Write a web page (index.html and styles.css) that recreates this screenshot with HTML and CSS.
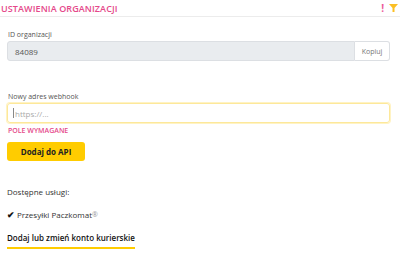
FILE: index.html
```html
<!DOCTYPE html>
<html lang="pl">
<head>
  <meta charset="UTF-8">
  <meta name="viewport" content="width=device-width, initial-scale=1.0">
  <title>Ustawienia organizacji</title>
  <link rel="stylesheet" href="styles.css">
</head>
<body>
  <div class="header">
    <span class="header-title">Ustawienia organizacji</span>
    <div class="header-icons">
      <span class="alert">!</span>
      <svg class="filter" width="9" height="8" viewBox="0 0 9 8">
        <path d="M0 0 H9 L5.5 4 V8 H3.5 V4 Z" fill="#fbbf24"/>
      </svg>
    </div>
  </div>

  <div class="content">
    <div class="field">
      <label class="label">ID organizacji</label>
      <div class="input-group">
        <div class="input readonly">84089</div>
        <button class="copy-btn">Kopiuj</button>
      </div>
    </div>

    <div class="field webhook">
      <label class="label">Nowy adres webhook</label>
      <div class="input webhook-input"><span class="caret"></span>https://...</div>
      <div class="error">Pole wymagane</div>
    </div>

    <button class="add-btn">Dodaj do API</button>

    <div class="services">
      <div class="services-title">Dostępne usługi:</div>
      <div class="service"><span class="check">✔</span>Przesyłki Paczkomat<span class="reg">®</span></div>
    </div>

    <div class="tab">Dodaj lub zmień konto kurierskie</div>
  </div>
</body>
</html>
```

FILE: styles.css
```css
body {
  font-family: "Open Sans", sans-serif;
  margin: 0;
  background-color: #ffffff;
  color: #333;
}
.header {
  display: flex;
  justify-content: space-between;
  align-items: center;
  height: 16px;
  padding: 0 2px 0 1px;
  border-bottom: 1px solid #ececec;
}
.header-title {
  color: #e5498a;
  font-size: 9px;
  font-weight: 600;
  text-transform: uppercase;
  letter-spacing: 0.1px;
}
.header-icons {
  display: flex;
  align-items: center;
  gap: 5px;
}
.alert {
  color: #ec5a9a;
  font-size: 10px;
  font-weight: 700;
  line-height: 1;
}
.content {
  padding: 0 10px 0 7px;
}
.field {
  margin-top: 13px;
}
.label {
  display: block;
  font-size: 7px;
  line-height: 9px;
  color: #555;
  margin-bottom: 2px;
  padding-left: 1px;
}
.input-group {
  display: flex;
}
.input {
  box-sizing: border-box;
  height: 20px;
  border: 1px solid #dcdfe3;
  border-radius: 3px;
  font-size: 8px;
  padding: 0 7px;
  display: flex;
  align-items: center;
  flex: 1;
}
.readonly {
  background-color: #e9ecef;
  color: #555;
  border-radius: 3px 0 0 3px;
}
.copy-btn {
  font-family: inherit;
  height: 20px;
  width: 35px;
  font-size: 7px;
  color: #777;
  background: #fff;
  border: 1px solid #dcdfe3;
  border-left: none;
  border-radius: 0 3px 3px 0;
  padding: 0;
}
.webhook {
  margin-top: 31px;
}
.webhook-input {
  border: 1px solid #fde89a;
  box-shadow: 0 0 0 1px #fff3c4;
  color: #aaa;
  padding-left: 5px;
}
.caret {
  width: 1px;
  height: 10px;
  background: #888;
  margin-right: 1px;
}
.error {
  color: #e5498a;
  font-size: 7px;
  font-weight: 600;
  text-transform: uppercase;
  margin-top: 3px;
  padding-left: 1px;
}
.add-btn {
  font-family: inherit;
  margin-top: 7px;
  width: 78px;
  height: 19px;
  background-color: #ffcc00;
  border: none;
  border-radius: 3px;
  font-size: 8px;
  font-weight: 700;
  color: #222;
  padding: 0;
}
.services {
  margin-top: 25px;
  font-size: 8px;
  color: #333;
}
.service {
  margin-top: 11px;
  display: flex;
  align-items: center;
}
.check {
  font-size: 9px;
  font-weight: 700;
  margin-right: 2px;
  color: #111;
}
.reg {
  color: #999;
  font-size: 7px;
}
.tab {
  display: inline-block;
  margin-top: 11px;
  font-size: 8px;
  font-weight: 600;
  color: #111;
  padding-bottom: 4px;
  border-bottom: 2px solid #ffcc00;
}
```
